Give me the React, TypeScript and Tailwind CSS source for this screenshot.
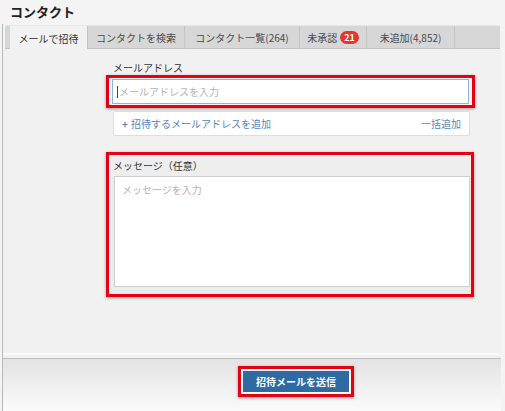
import React from 'react';

const TABS = [
  { label: 'メールで招待', w: 'w-[78px]', active: true },
  { label: 'コンタクトを検索', w: 'w-[97px]' },
  { label: 'コンタクト一覧(264)', w: 'w-[115px]' },
  { label: '未承認', w: 'w-[67px]', badge: '21' },
  { label: '未追加(4,852)', w: 'w-[88px]' },
];

export default function App() {
  return (
    <div className="w-[505px] h-[411px] overflow-hidden bg-[#f4f4f4] text-[#333] font-['Noto_Sans_CJK_JP','Noto_Sans',sans-serif]">
      <div className="h-[24px] pl-[10px] pt-[3px] text-[13px] font-bold leading-[18px] text-[#222]">
        コンタクト
      </div>

      <div className="ml-[2px] w-[499px] h-[387px] border-l border-[#b9b9b9] flex flex-col">
        {/* tabs */}
        <div className="mt-[1px] ml-[2px] w-[495px] h-[24px] flex bg-[#d7d7d7] border-t border-[#e6e6e6] border-b border-b-[#c2c2c2] pl-[5px]">
          {TABS.map((t) => (
            <div
              key={t.label}
              className={`${t.w} h-[23px] flex items-center justify-center gap-[3px] text-[10px] border-r border-[#c4c4c4] ${
                t.active ? 'bg-[#f2f2f2] text-[#333] h-[24px]' : 'text-[#4a4a4a]'
              }`}
            >
              <span>{t.label}</span>
              {t.badge && (
                <span className="bg-[#e8352a] text-white text-[9px] font-bold leading-[13px] px-[4px] rounded-full">
                  {t.badge}
                </span>
              )}
            </div>
          ))}
        </div>

        {/* content */}
        <div className="flex-1 bg-[#f1f1f1] pl-[110px] pt-[13px] relative">
          <div className="w-[357px]">
            <div className="text-[10px] leading-[12px] text-[#333] mb-[1px]">メールアドレス</div>
            <div className="-ml-[7px] -mr-[5px] border-[3px] border-[#e50012] px-[3px] py-[1px] shadow-[0_1px_3px_rgba(0,0,0,0.35)] bg-[#f4f4f4]">
              <div className="h-[25px] bg-white border border-[#8fb6d8] flex items-center pl-[4px] text-[10px] text-[#b5b5b5]">
                <span className="w-px h-[12px] bg-[#444] mr-[1px]" />
                メールアドレスを入力
              </div>
            </div>
            <div className="mt-[3px] h-[25px] bg-white border border-[#dedede] rounded-[2px] flex items-center justify-between px-[8px] text-[10px] text-[#4f87bd]">
              <span>
                <span className="font-bold mr-[3px]">+</span>招待するメールアドレスを追加
              </span>
              <span>一括追加</span>
            </div>

            <div className="mt-[16px] -ml-[7px] -mr-[4px] border-[3px] border-[#e50012] shadow-[0_1px_3px_rgba(0,0,0,0.35)] bg-[#ececec]">
              <div className="h-[21px] pl-[4px] flex items-center text-[10px] text-[#333] bg-[#eeeeee]">
                メッセージ（任意）
              </div>
              <div className="pl-[5px] pr-[1px] pb-[7px]">
                <div className="h-[111px] bg-white border border-[#cfcfcf] pl-[7px] pt-[5px] text-[10px] text-[#b5b5b5]">
                  メッセージを入力
                </div>
              </div>
            </div>
          </div>
          <div className="absolute left-0 right-[2px] bottom-[3px] h-[2px] bg-[#fafafa]" />
        </div>

        {/* footer */}
        <div className="h-[53px] border-t border-[#bfbfbf] bg-gradient-to-b from-[#e3e3e3] to-[#fbfbfb] pl-[235px] pt-[7px]">
          <div className="inline-block border-[3px] border-[#e50012] p-[2px] bg-white shadow-[0_1px_3px_rgba(0,0,0,0.35)]">
            <div className="w-[106px] h-[21px] bg-[#2e6ba3] flex items-center justify-center text-white text-[10px] font-bold">
              招待メールを送信
            </div>
          </div>
        </div>
      </div>
    </div>
  );
}
